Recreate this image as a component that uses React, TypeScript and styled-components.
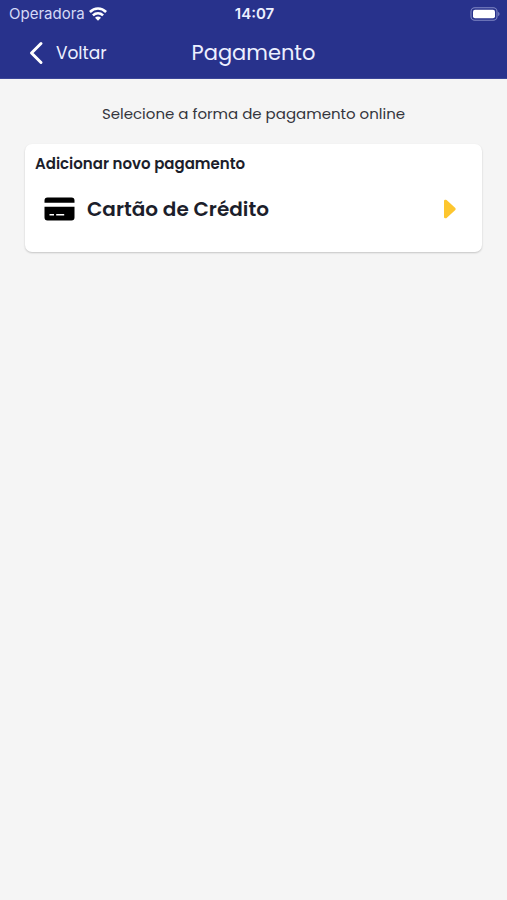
import React from "react";
import styled, { createGlobalStyle } from "styled-components";

const navy = "#28328c";

const GlobalStyle = createGlobalStyle`
  *, *::before, *::after { box-sizing: border-box; }
  body {
    margin: 0;
    background: #f5f5f5;
    color: #1c1e2b;
    font-family: Poppins, Inter, sans-serif;
  }
`;

const Page = styled.div`
  min-height: 100vh;
  background: #f5f5f5;
`;

const Header = styled.header`
  background: ${navy};
  color: #edf0ff;
  border-bottom: 1px solid #3c4698;
`;

const StatusBar = styled.div`
  display: grid;
  grid-template-columns: 1fr auto 1fr;
  align-items: center;
  height: 28px;
  padding: 0 7px 0 9px;
  font-family: Inter, sans-serif;
  font-size: 15px;
  line-height: 20px;
`;

const Carrier = styled.div`
  display: flex;
  align-items: center;
  gap: 4px;
  color: #d5daf7;
`;

const Clock = styled.time`
  font-weight: 600;
`;

const BatterySlot = styled.div`
  display: flex;
  justify-content: flex-end;
`;

const NavBar = styled.div`
  display: grid;
  grid-template-columns: 1fr auto 1fr;
  align-items: center;
  height: 50px;
  padding: 0 28px;
`;

const BackButton = styled.button`
  display: flex;
  align-items: center;
  gap: 12px;
  justify-self: start;
  padding: 0;
  border: 0;
  background: none;
  color: inherit;
  font: inherit;
  font-size: 17px;
  line-height: 24px;
  cursor: pointer;
`;

const Title = styled.h1`
  margin: 0;
  font-size: 21px;
  font-weight: 400;
  line-height: 28px;
`;

const Content = styled.main`
  padding: 24px;
`;

const Hint = styled.p`
  margin: 0 0 19px;
  color: #34353d;
  font-size: 15px;
  line-height: 22px;
  text-align: center;
`;

const Card = styled.section`
  margin: 0 1px;
  padding: 9px 10px 19px;
  border-radius: 7px;
  background: #fff;
  box-shadow: 0 1px 2px rgba(0, 0, 0, 0.2);
`;

const CardTitle = styled.h2`
  margin: 0 0 10px;
  font-size: 15px;
  font-weight: 600;
  line-height: 22px;
`;

const MethodButton = styled.button`
  display: flex;
  align-items: center;
  gap: 12px;
  width: 100%;
  height: 48px;
  padding: 0 15px 0 9px;
  border: 0;
  background: none;
  color: inherit;
  font: inherit;
  font-size: 20px;
  font-weight: 600;
  text-align: left;
  cursor: pointer;
`;

const MethodName = styled.span`
  flex: 1;
`;

const WifiIcon = () => (
  <svg width="18" height="14" viewBox="0 0 18 14" fill="none" stroke="#fff" strokeWidth="2.6" aria-hidden="true">
    <path d="M.9 5C5.6.4 12.4.4 17.1 5" />
    <path d="M3.9 8.4c3-2.8 7.2-2.8 10.2 0" />
    <path d="M9 13.8 6 10.8c1.7-1.6 4.3-1.6 6 0z" fill="#fff" stroke="none" />
  </svg>
);

const BatteryIcon = () => (
  <svg width="30" height="14" viewBox="0 0 30 14" aria-hidden="true">
    <rect x="1" y=".7" width="26" height="12.6" rx="3.8" fill="none" stroke="#8088c4" strokeWidth="1.1" />
    <rect x="3" y="2.7" width="22" height="8.6" rx="2" fill="#fff" />
    <path d="M28.2 4.8c1.8.7 1.8 3.7 0 4.4z" fill="#8088c4" />
  </svg>
);

const BackIcon = () => (
  <svg width="16" height="24" viewBox="0 0 16 24" fill="none" stroke="#fff" strokeWidth="3" strokeLinecap="round" strokeLinejoin="round" aria-hidden="true">
    <path d="M13 2.5 3.5 12 13 21.5" />
  </svg>
);

const CardIcon = () => (
  <svg width="31" height="24" viewBox="0 0 31 24" aria-hidden="true">
    <path d="M3.5.5h24a3 3 0 0 1 3 3v2.3H.5V3.5a3 3 0 0 1 3-3z" />
    <path fillRule="evenodd" d="M.5 9.7h30v10.8a3 3 0 0 1-3 3h-24a3 3 0 0 1-3-3zM5.5 17v1.6H10V17zM12.2 17v1.6h8V17z" />
  </svg>
);

const ArrowIcon = () => (
  <svg width="14" height="20" viewBox="0 0 14 20" aria-hidden="true">
    <path d="M2.2 2v16h.6l8.7-8-8.7-8z" fill="#fdc62f" stroke="#fdc62f" strokeWidth="2.4" strokeLinejoin="round" />
  </svg>
);

export default function App() {
  return (
    <>
      <GlobalStyle />
      <Page>
        <Header>
          <StatusBar>
            <Carrier>
              Operadora
              <WifiIcon />
            </Carrier>
            <Clock>14:07</Clock>
            <BatterySlot>
              <BatteryIcon />
            </BatterySlot>
          </StatusBar>
          <NavBar>
            <BackButton type="button">
              <BackIcon />
              Voltar
            </BackButton>
            <Title>Pagamento</Title>
          </NavBar>
        </Header>
        <Content>
          <Hint>Selecione a forma de pagamento online</Hint>
          <Card>
            <CardTitle>Adicionar novo pagamento</CardTitle>
            <MethodButton type="button">
              <CardIcon />
              <MethodName>Cartão de Crédito</MethodName>
              <ArrowIcon />
            </MethodButton>
          </Card>
        </Content>
      </Page>
    </>
  );
}
